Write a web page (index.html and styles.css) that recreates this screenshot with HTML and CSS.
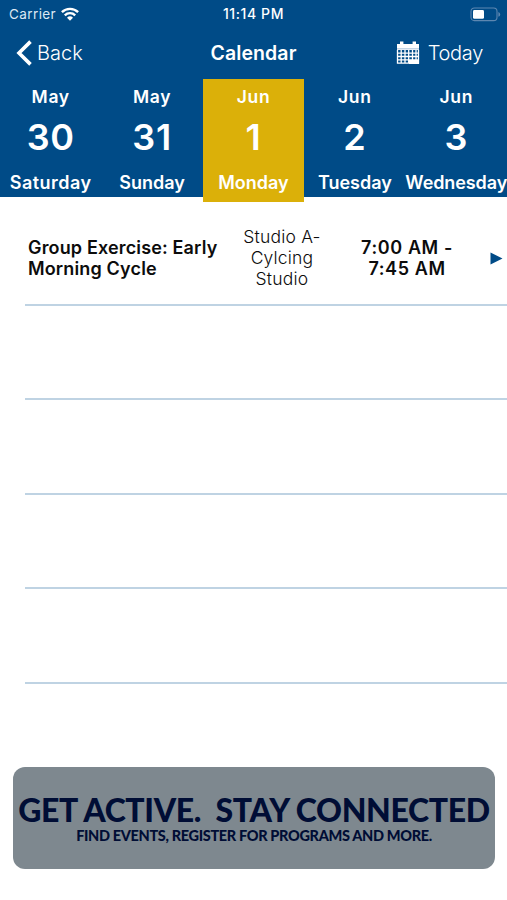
FILE: index.html
```html
<!DOCTYPE html>
<html lang="en">
<head>
<meta charset="utf-8">
<title>Calendar</title>
<link rel="stylesheet" href="styles.css">
</head>
<body>
<header class="header">
  <div class="status">
    <div class="carrier"><span>Carrier</span>
      <svg class="wifi" width="18" height="14" viewBox="0 0 18 14" fill="none" stroke="#fff" stroke-width="2.4"><path d="M.9 5.2a11.5 11.5 0 0 1 16.2 0M3.8 8.3a7.4 7.4 0 0 1 10.4 0"/><path d="M9 13.8l-3-3.1a4.3 4.3 0 0 1 6 0z" fill="#fff" stroke="none"/></svg>
    </div>
    <div class="time">11:14 PM</div>
    <svg class="battery" width="31" height="15" viewBox="0 0 31 15"><rect x="1" y="1" width="26" height="12.6" rx="3.4" fill="none" stroke="#5d87b1" stroke-width="1.1"/><rect x="3" y="3" width="11" height="8.8" rx="1.4" fill="#fff"/><path d="M28.4 5v4.8q1.8-.6 1.8-2.4T28.4 5z" fill="#5d87b1"/></svg>
  </div>
  <nav class="nav">
    <div class="back"><svg width="17" height="28" viewBox="0 0 17 28" fill="none" stroke="#fff" stroke-width="3.6"><path d="M14.5 2.6L3 14l11.5 11.4"/></svg><span>Back</span></div>
    <h1 class="title">Calendar</h1>
    <div class="today">
      <svg width="24" height="24" viewBox="0 0 24 24"><path d="M1 3h22v6H1z" fill="#fff"/><path d="M4 .6h3.4v4H4zM16.6.6H20v4h-3.4z" fill="#fff"/><path d="M1.5 9v13.2h21V9M1.5 12.2h21M1.5 15.5h21M1.5 18.8h21M5.2 9v13M9 9v13M12.7 9v13M16.5 9v13M20 9v13" fill="none" stroke="#fff" stroke-width="1.3"/><path d="M13 19h10v4H13z" fill="#fff"/><path d="M1 7.8h22" stroke="#86a9cb" stroke-width=".7"/></svg>
      <span>Today</span></div>
  </nav>
  <div class="days">
    <div class="day"><span class="month">May</span><span class="num">30</span><span class="name sat">Saturday</span></div>
    <div class="day"><span class="month">May</span><span class="num">31</span><span class="name">Sunday</span></div>
    <div class="day selected"><span class="month">Jun</span><span class="num">1</span><span class="name">Monday</span></div>
    <div class="day"><span class="month">Jun</span><span class="num">2</span><span class="name">Tuesday</span></div>
    <div class="day"><span class="month">Jun</span><span class="num">3</span><span class="name wide">Wednesday</span></div>
  </div>
</header>
<main class="list">
  <div class="row">
    <div class="event">Group Exercise: Early<br>Morning Cycle</div>
    <div class="place">Studio A-<br>Cylcing<br>Studio</div>
    <div class="hours">7:00 AM -<br>7:45 AM</div>
    <svg class="arrow" width="13" height="13" viewBox="0 0 13 13"><path d="M.5.5l12 6-12 6z" fill="#004b87"/></svg>
  </div>
  <div class="row"></div>
  <div class="row"></div>
  <div class="row"></div>
  <div class="row"></div>
</main>
<footer class="banner">
  <div class="headline">GET ACTIVE.&nbsp; STAY CONNECTED</div>
  <div class="tagline">FIND EVENTS, REGISTER FOR PROGRAMS AND MORE.</div>
</footer>
</body>
</html>
```
FILE: styles.css
```css
* { box-sizing: border-box; }
body { margin: 0; width: 507px; height: 900px; overflow: hidden; background: #fff; color: #0c0c0c; font-family: Inter, "Liberation Sans", sans-serif; }
span, .time, .headline, .tagline { white-space: nowrap; }
.header { height: 197px; background: #004b87; color: #fff; }
.status { height: 27px; display: grid; grid-template-columns: 1fr 100px 1fr; align-items: center; padding: 0 6px; font-size: 13.5px; line-height: 28px; }
.carrier { display: flex; align-items: center; gap: 5px; padding-left: 3px; color: #dce8f3; letter-spacing: .4px; }
.time { text-align: center; font-weight: 500; font-size: 14px; letter-spacing: .6px; }
.battery { justify-self: end; }
.nav { height: 52px; display: grid; grid-template-columns: 1fr 120px 1fr; align-items: center; padding: 0 16px; font-size: 20px; font-weight: 300; }
.back, .today { display: flex; align-items: center; }
.back { gap: 4px; }
.today { gap: 8px; padding-right: 8px; justify-content: flex-end; letter-spacing: -.3px; }
.title { margin: 0; text-align: center; font-size: 19.5px; font-weight: 600; letter-spacing: .1px; }
.days { display: grid; grid-template-columns: repeat(5, 101.4px); }
.day { height: 118px; display: flex; flex-direction: column; align-items: center; font-weight: 600; }
.selected { height: 123px; background: #dbb009; }
.month { margin-top: 7px; font-size: 17.5px; line-height: 22px; letter-spacing: .7px; }
.num { margin-top: 6px; font-size: 36px; line-height: 46px; letter-spacing: .7px; }
.name { margin-top: 12px; font-size: 18px; line-height: 22px; }
.sat { letter-spacing: .5px; }
.wide { letter-spacing: -.1px; }
.list { padding: 14px 0 0 25px; }
.row { height: 94.6px; border-bottom: 2px solid #bfd3e3; display: grid; grid-template-columns: 199px 116px 134px 1fr; align-items: center; font-size: 17.5px; line-height: 21px; }
.row > * { padding-top: 1px; }
.event { padding-left: 3px; font-weight: 600; font-size: 18px; letter-spacing: .15px; white-space: nowrap; }
.place { text-align: center; font-weight: 300; letter-spacing: .2px; }
.hours { text-align: center; font-weight: 600; font-size: 18px; letter-spacing: .6px; }
.row > .arrow { margin: 2px 0 0 16px; padding: 0; }
.banner { margin: 83px 12px 0 13px; height: 102px; border-radius: 12px; background: #7e888f; color: #000d35; font-family: Lato, sans-serif; text-align: center; display: flex; flex-direction: column; align-items: center; padding-top: 24px; }
.headline { font-size: 32px; line-height: 38px; font-weight: 900; letter-spacing: -.35px; }
.tagline { font-size: 14.5px; line-height: 14px; font-weight: 900; letter-spacing: -.34px; }
```
